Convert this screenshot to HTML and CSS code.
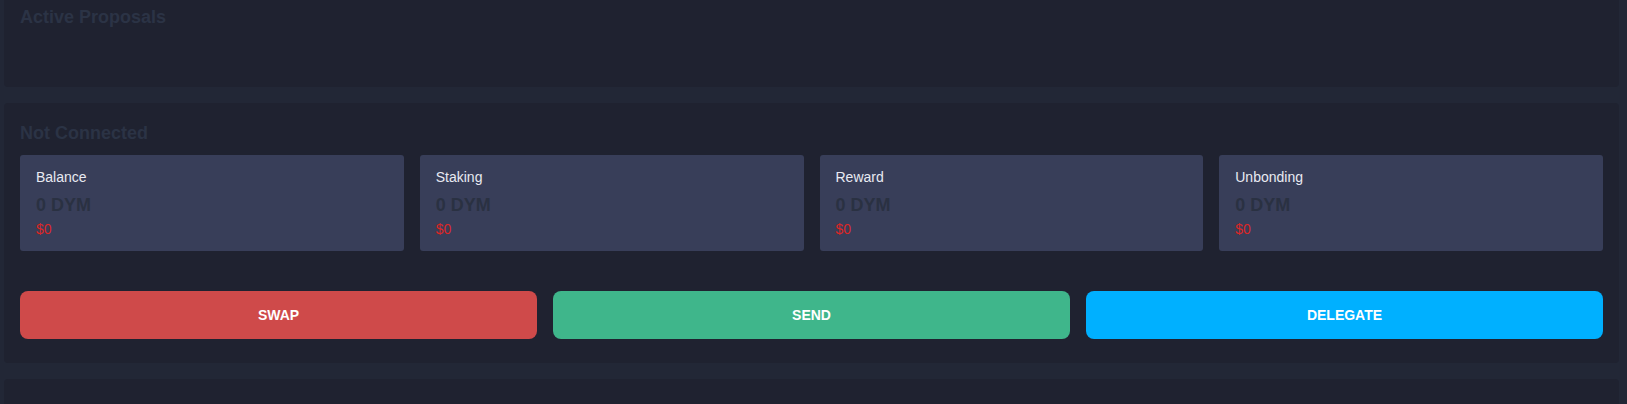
FILE: index.html
```html
<!DOCTYPE html>
<html lang="en">
<head>
<meta charset="utf-8">
<title>Dashboard</title>
<link rel="stylesheet" href="styles.css">
</head>
<body>
<main class="page">
  <section class="panel panel-proposals">
    <h2 class="panel-title">Active Proposals</h2>
  </section>

  <section class="panel panel-wallet">
    <h2 class="panel-title">Not Connected</h2>
    <div class="stats">
      <div class="stat">
        <div class="stat-label">Balance</div>
        <div class="stat-value">0 DYM</div>
        <div class="stat-usd">$0</div>
      </div>
      <div class="stat">
        <div class="stat-label">Staking</div>
        <div class="stat-value">0 DYM</div>
        <div class="stat-usd">$0</div>
      </div>
      <div class="stat">
        <div class="stat-label">Reward</div>
        <div class="stat-value">0 DYM</div>
        <div class="stat-usd">$0</div>
      </div>
      <div class="stat">
        <div class="stat-label">Unbonding</div>
        <div class="stat-value">0 DYM</div>
        <div class="stat-usd">$0</div>
      </div>
    </div>
    <div class="actions">
      <button class="btn btn-swap">SWAP</button>
      <button class="btn btn-send">SEND</button>
      <button class="btn btn-delegate">DELEGATE</button>
    </div>
  </section>

  <section class="panel panel-next"></section>
</main>
</body>
</html>
```

FILE: styles.css
```css
* { box-sizing: border-box; }

html, body {
  margin: 0;
  padding: 0;
  background: #222736;
  font-family: "Liberation Sans", Arial, sans-serif;
  overflow: hidden;
}

.page {
  display: flex;
  flex-direction: column;
  gap: 16px;
  padding: 0 8px 0 4px;
}

.panel {
  background: #1f2230;
  border-radius: 4px;
  padding: 16px;
}

.panel-proposals {
  height: 87px;
  padding-top: 3px;
  border-radius: 0 0 4px 4px;
}

.panel-wallet {
  padding-bottom: 24px;
}

.panel-next {
  height: 25px;
  border-radius: 4px 4px 0 0;
}

.panel-title {
  margin: 0;
  font-size: 18px;
  line-height: 28px;
  font-weight: 700;
  color: #2b3345;
}

.stats {
  margin-top: 8px;
  display: grid;
  grid-template-columns: repeat(4, 1fr);
  gap: 16px;
}

.stat {
  background: #383e59;
  border-radius: 3px;
  padding: 12px 16px;
  height: 96px;
}

.stat-label {
  font-size: 14px;
  line-height: 20px;
  color: #e8eaf2;
}

.stat-value {
  margin-top: 4px;
  font-size: 18px;
  line-height: 28px;
  font-weight: 700;
  color: #2a3142;
}

.stat-usd {
  font-size: 14px;
  line-height: 20px;
  color: #dc2626;
}

.actions {
  margin-top: 40px;
  display: grid;
  grid-template-columns: repeat(3, 1fr);
  gap: 16px;
}

.btn {
  height: 48px;
  border: 0;
  border-radius: 8px;
  color: #ffffff;
  font-family: "Liberation Sans", Arial, sans-serif;
  font-size: 14px;
  font-weight: 700;
  cursor: pointer;
}

.btn-swap { background: #cf4a4a; }
.btn-send { background: #3fb68b; }
.btn-delegate { background: #00b0ff; }
```
